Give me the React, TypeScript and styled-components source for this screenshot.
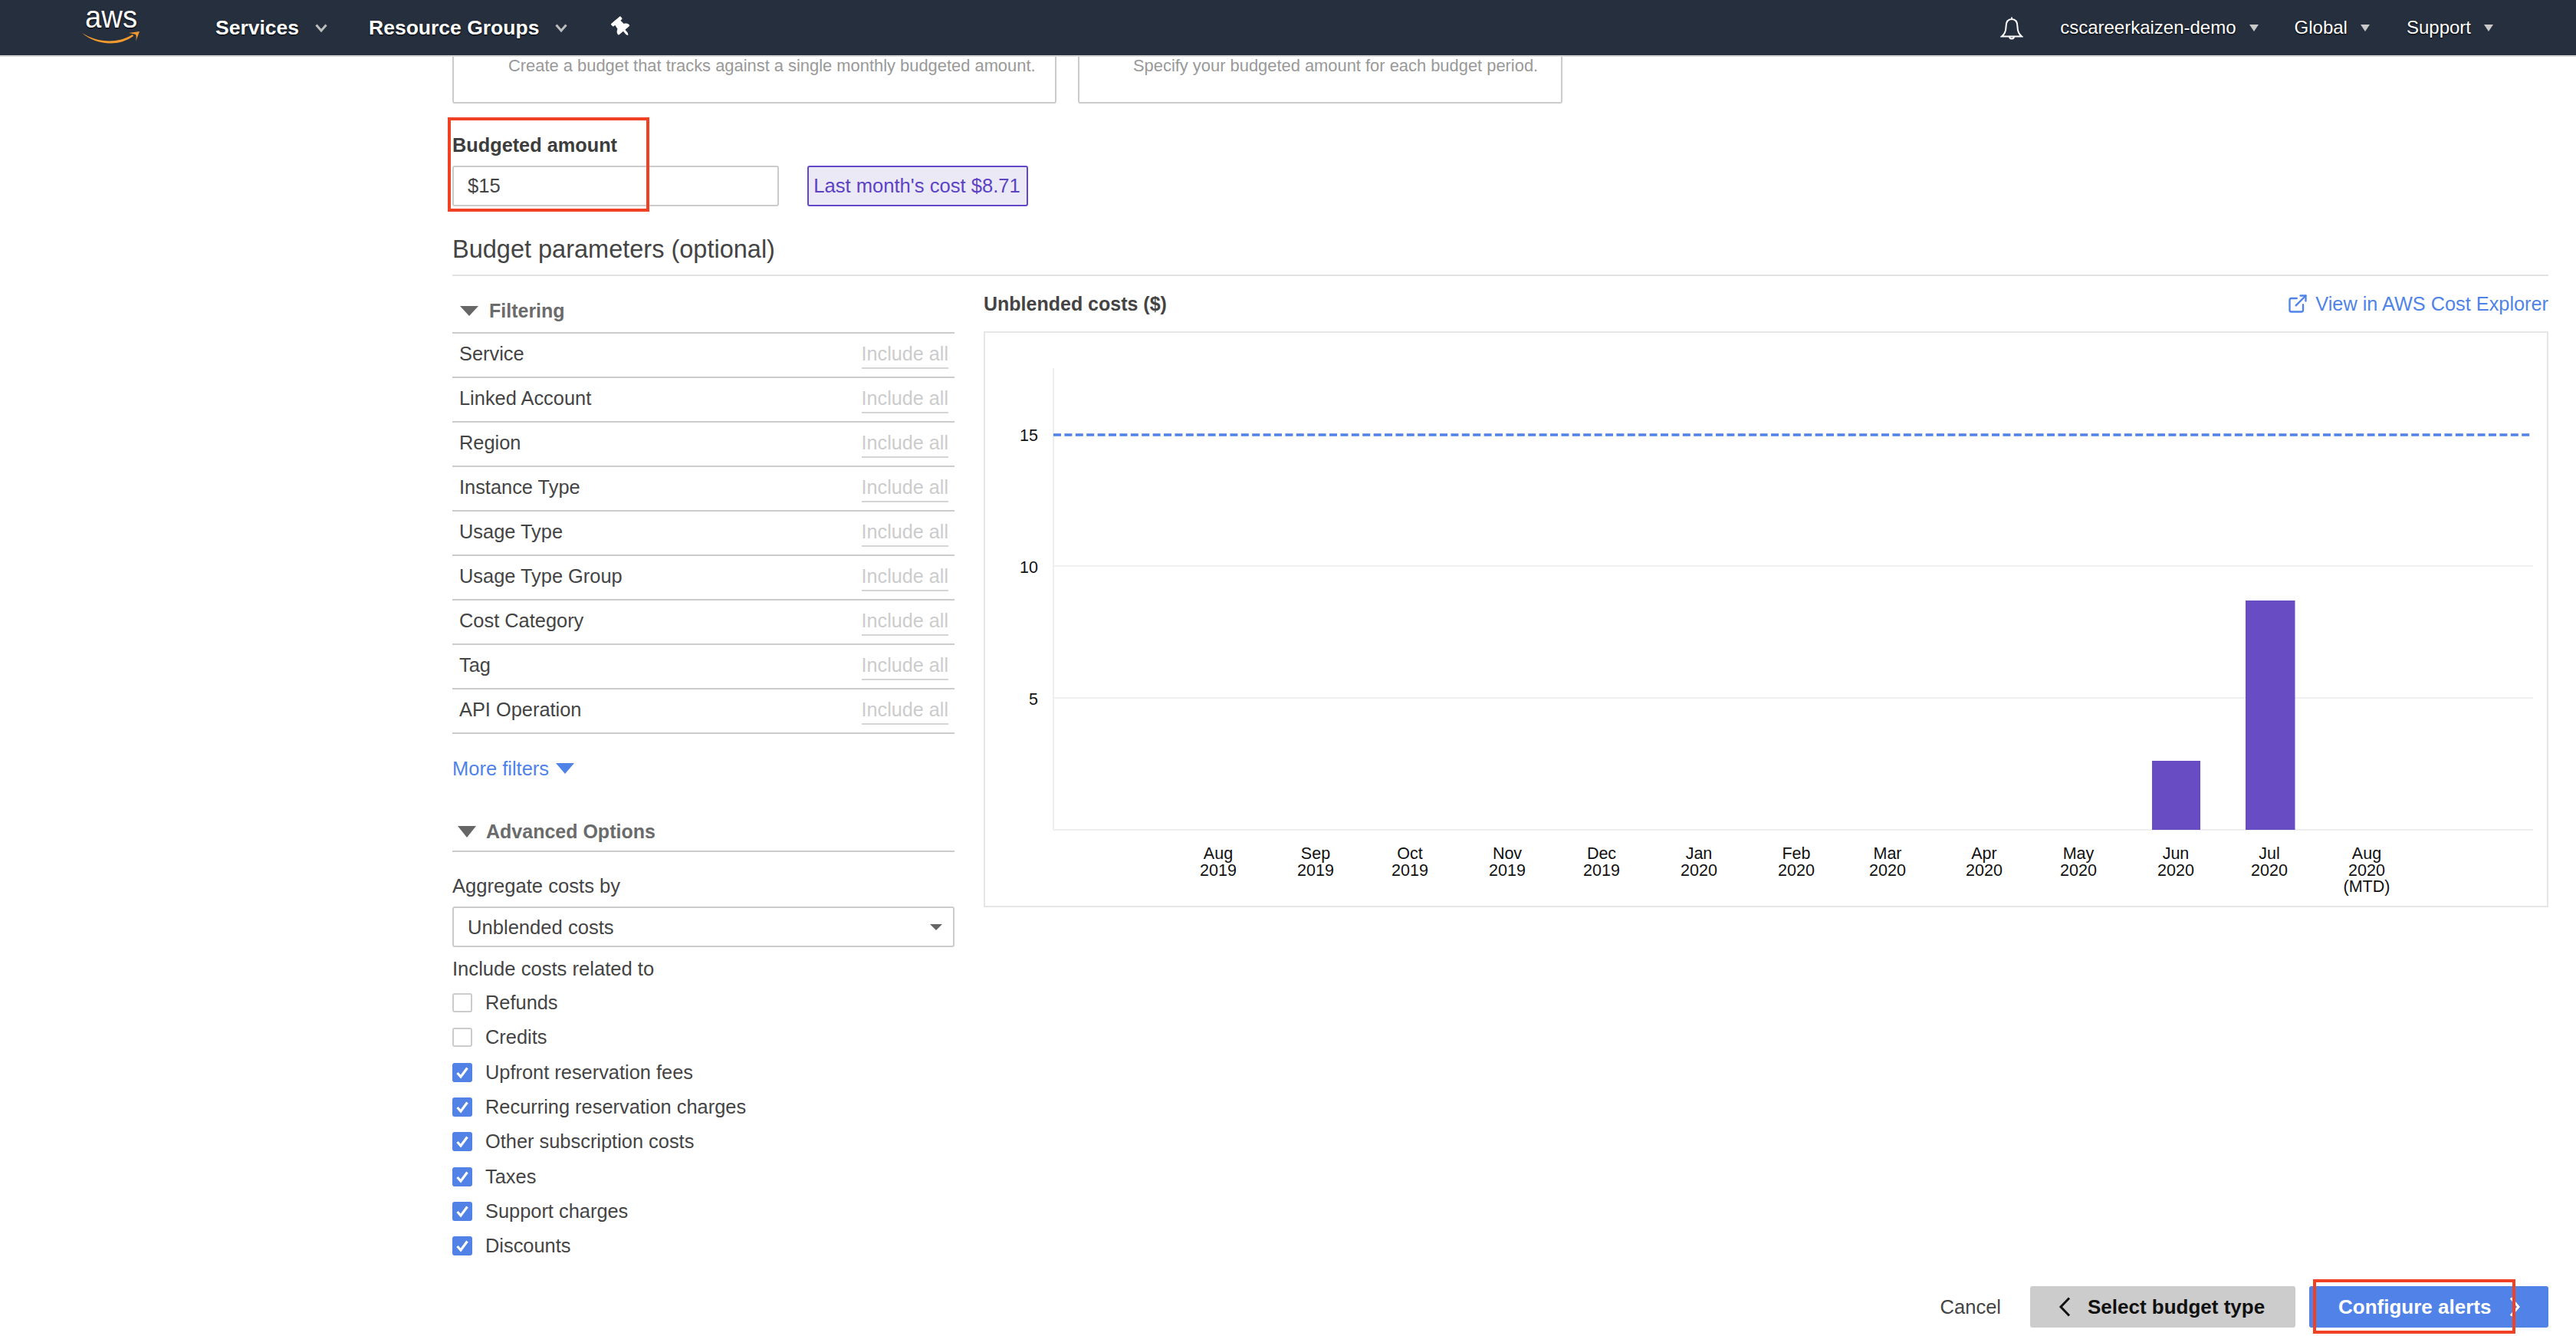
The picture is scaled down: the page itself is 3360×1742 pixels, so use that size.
import React from 'react'
import styled, { createGlobalStyle } from 'styled-components'
import { ExternalLink } from 'lucide-react'
import { FaThumbtack } from 'react-icons/fa'

const Global = createGlobalStyle`
html, body { margin: 0; padding: 0; background: #fff; }
body { font-family: "Liberation Sans", Arial, sans-serif; color: #444; overflow: hidden; }
* { box-sizing: border-box; }
`

const Page = styled.div`
width: 3360px;
height: 1742px;
overflow: hidden;
`

const Nav = styled.header`
height: 74px;
background: #262f3e;
border-bottom: 2px solid #d5d5d5;
display: flex;
align-items: center;
color: #fff;
text-shadow: 0 1px 2px #000;
`

const Logo = styled.svg`
width: 78px;
height: 72px;
margin-left: 104px;
margin-right: 99px;
`

const NavMain = styled.a`
display: flex;
align-items: center;
font-size: 26.5px;
font-weight: bold;
gap: 21px;
margin-right: 54px;
`

const Pin = styled(FaThumbtack)`
width: 26px;
height: 26px;
transform: rotate(-40deg);
margin-left: 4px;
`

const NavRight = styled.div`
margin-left: auto;
margin-right: 108px;
display: flex;
align-items: center;
`

const NavItem = styled.a<{ $gap: number }>`
display: flex;
align-items: center;
font-size: 24px;
gap: 17px;
margin-left: ${(p) => p.$gap}px;
`

const Content = styled.main`
padding: 0 36px 0 590px;
`

const TypeRow = styled.div`
display: flex;
gap: 28px;
`

const TypeCard = styled.div<{ $w: number; $pad: number }>`
width: ${(p) => p.$w}px;
height: 61px;
border: 2px solid #ccc;
border-top: 0;
border-radius: 0 0 3px 3px;
padding-left: ${(p) => p.$pad}px;
font-size: 21.9px;
line-height: 24px;
color: #999;
`

const AmountLabel = styled.div`
font-size: 25.3px;
font-weight: bold;
line-height: 30px;
margin-top: 39px;
color: #3d3d3d;
`

const AmountRow = styled.div`
display: flex;
gap: 37px;
margin-top: 12px;
position: relative;
`

const Highlight = styled.div<{ $l: number; $t: number; $w: number; $h: number }>`
position: absolute;
left: ${(p) => p.$l}px;
top: ${(p) => p.$t}px;
width: ${(p) => p.$w}px;
height: ${(p) => p.$h}px;
border: 4px solid #f04125;
pointer-events: none;
`

const AmountInput = styled.div`
width: 426px;
height: 53px;
border: 2px solid #ccc;
border-radius: 3px;
display: flex;
align-items: center;
padding-left: 18px;
font-size: 25.6px;
`

const CostButton = styled.div`
width: 288px;
height: 53px;
border: 2px solid #6248c8;
border-radius: 3px;
background: #ece9f7;
color: #5b43c4;
display: flex;
align-items: center;
justify-content: center;
padding-right: 2px;
font-size: 25.6px;
white-space: nowrap;
`

const SectionTitle = styled.h2`
font-size: 32.5px;
font-weight: normal;
line-height: 40px;
margin: 36px 0 0;
padding-bottom: 13px;
border-bottom: 2px solid #e2e2e2;
color: #444;
`

const Columns = styled.div`
display: flex;
gap: 38px;
`

const LeftCol = styled.div`
width: 655px;
flex: none;
`

const RightCol = styled.div`
flex: 1;
`

const Caret = styled.span<{ $w: number; $h: number; $c: string }>`
display: inline-block;
width: 0;
height: 0;
border-left: ${(p) => p.$w / 2}px solid transparent;
border-right: ${(p) => p.$w / 2}px solid transparent;
border-top: ${(p) => p.$h}px solid ${(p) => p.$c};
flex: none;
`

const FilterHead = styled.div`
height: 75px;
padding: 31px 0 0 10px;
display: flex;
align-items: flex-start;
gap: 14px;
font-size: 25px;
line-height: 28px;
font-weight: bold;
color: #6b6b6b;
border-bottom: 2px solid #ccc;
`

const CaretWrap = styled.span`
height: 28px;
display: flex;
align-items: center;
`

const FilterRow = styled.div`
height: 58px;
border-bottom: 2px solid #ccc;
display: flex;
justify-content: space-between;
padding: 0 8px 0 9px;
font-size: 25.4px;
line-height: 28px;
`

const FilterName = styled.span`
padding-top: 12px;
`

const IncludeAll = styled.span`
height: 46px;
padding-top: 12px;
font-size: 25.2px;
color: #ccc;
border-bottom: 2px solid #d5d5d5;
`

const MoreFilters = styled.a`
display: flex;
align-items: center;
gap: 9px;
margin-top: 30px;
height: 30px;
font-size: 25.5px;
color: #4f83e8;
`

const AdvancedHead = styled.div`
display: flex;
align-items: flex-start;
margin-top: 53px;
height: 41px;
padding-left: 7px;
gap: 13px;
font-size: 25px;
line-height: 28px;
font-weight: bold;
color: #6b6b6b;
border-bottom: 2px solid #ccc;
`

const FieldLabel = styled.div<{ $top: number }>`
font-size: 25.6px;
line-height: 28px;
margin-top: ${(p) => p.$top}px;
`

const SelectBox = styled.div`
height: 53px;
margin-top: 13px;
border: 2px solid #ccc;
border-radius: 3px;
display: flex;
align-items: center;
justify-content: space-between;
padding: 1px 14px 0 18px;
font-size: 25.6px;
`

const CheckList = styled.div`
margin-top: 8px;
`

const CheckRow = styled.label`
height: 45.3px;
display: flex;
align-items: center;
gap: 17px;
font-size: 25.4px;
`

const Box = styled.span<{ $on: boolean }>`
width: 26px;
height: 25px;
flex: none;
border-radius: 3px;
border: 2px solid ${(p) => (p.$on ? '#5282e6' : '#ccc')};
background: ${(p) => (p.$on ? '#5282e6' : '#fff')};
display: flex;
align-items: center;
justify-content: center;
`

const ChartHead = styled.div`
height: 72px;
display: flex;
justify-content: space-between;
align-items: center;
`

const ChartTitle = styled.div`
font-size: 25px;
font-weight: bold;
color: #444;
`

const ExplorerLink = styled.a`
display: flex;
align-items: center;
gap: 9px;
font-size: 25.3px;
color: #4f83e8;
`

const ChartPanel = styled.div`
height: 751px;
border: 2px solid #e6e6e6;
`

const ChartSvg = styled.svg`
display: block;
width: 2037px;
height: 747px;
font-family: "Liberation Sans", Arial, sans-serif;
`

const Footer = styled.footer`
display: flex;
justify-content: flex-end;
align-items: center;
margin-top: 30px;
position: relative;
`

const CancelLink = styled.a`
font-size: 25.5px;
margin-right: 38px;
`

const PrevButton = styled.button`
width: 346px;
height: 54px;
border: 0;
border-radius: 3px;
background: #ccc;
color: #111;
font: bold 26px "Liberation Sans", Arial, sans-serif;
display: flex;
align-items: center;
padding-left: 37px;
gap: 22px;
`

const NextButton = styled.button`
width: 312px;
height: 54px;
margin-left: 18px;
border: 0;
border-radius: 3px;
background: #5082e8;
color: #fff;
font: bold 26px "Liberation Sans", Arial, sans-serif;
display: flex;
align-items: center;
padding-left: 38px;
gap: 24px;
`

const filters = ['Service', 'Linked Account', 'Region', 'Instance Type', 'Usage Type', 'Usage Type Group', 'Cost Category', 'Tag', 'API Operation']

const costs = [
  { label: 'Refunds', on: false },
  { label: 'Credits', on: false },
  { label: 'Upfront reservation fees', on: true },
  { label: 'Recurring reservation charges', on: true },
  { label: 'Other subscription costs', on: true },
  { label: 'Taxes', on: true },
  { label: 'Support charges', on: true },
  { label: 'Discounts', on: true },
]

const months = [
  { x: 1589, m: 'Aug', y: '2019' },
  { x: 1716, m: 'Sep', y: '2019' },
  { x: 1839, m: 'Oct', y: '2019' },
  { x: 1966, m: 'Nov', y: '2019' },
  { x: 2089, m: 'Dec', y: '2019' },
  { x: 2216, m: 'Jan', y: '2020' },
  { x: 2343, m: 'Feb', y: '2020' },
  { x: 2462, m: 'Mar', y: '2020' },
  { x: 2588, m: 'Apr', y: '2020' },
  { x: 2711, m: 'May', y: '2020' },
  { x: 2838, m: 'Jun', y: '2020' },
  { x: 2960, m: 'Jul', y: '2020' },
  { x: 3087, m: 'Aug', y: '2020', extra: '(MTD)' },
]

const NavChevron = () => (
  <svg width="16" height="11" viewBox="0 0 16 11">
    <path d="M1.5 1.5 L8 9 L14.5 1.5" fill="none" stroke="#bdbdbd" strokeWidth="3" />
  </svg>
)

const Tick = () => (
  <svg width="18" height="17" viewBox="0 0 18 17">
    <path d="M2.5 9 L7 14 L15.5 2.5" fill="none" stroke="#fff" strokeWidth="3.2" />
  </svg>
)

const Bell = () => (
  <svg width="30" height="31" viewBox="0 0 30 31">
    <path d="M15 1.5 V4 M15 4 C9 4 7.5 9 7.5 14 C7.5 20 5 24 2 26.5 H28 C25 24 22.5 20 22.5 14 C22.5 9 21 4 15 4 Z M12 26.5 C12 30.5 18 30.5 18 26.5" fill="none" stroke="#fff" strokeWidth="2" />
  </svg>
)

const Chart = () => (
  <ChartSvg viewBox="1285 434 2037 747">
    <line x1="1374" y1="480" x2="1374" y2="1082" stroke="#eee" strokeWidth="2" />
    <line x1="1374" y1="738" x2="3304" y2="738" stroke="#f0f0f0" strokeWidth="2" />
    <line x1="1374" y1="910" x2="3304" y2="910" stroke="#f0f0f0" strokeWidth="2" />
    <line x1="1374" y1="1082" x2="3304" y2="1082" stroke="#eee" strokeWidth="2" />
    <line x1="1374" y1="567" x2="3300" y2="567" stroke="#4f83e8" strokeWidth="3.5" strokeDasharray="10 4.4" />
    <rect x="2807" y="992" width="63" height="90" fill="#674cc4" />
    <rect x="2929" y="783" width="64.5" height="299" fill="#674cc4" />
    <g fontSize="21.5" fill="#111" textAnchor="end">
      <text x="1354" y="575">15</text>
      <text x="1354" y="747">10</text>
      <text x="1354" y="919">5</text>
    </g>
    <g fontSize="21.5" fill="#111" textAnchor="middle">
      {months.map((d) => (
        <text key={d.m + d.y} x={d.x} y="1120">
          <tspan x={d.x}>{d.m}</tspan>
          <tspan x={d.x} dy="21.5">{d.y}</tspan>
          {d.extra && <tspan x={d.x} dy="21.5">{d.extra}</tspan>}
        </text>
      ))}
    </g>
  </ChartSvg>
)

const App = () => {
  return (
    <Page>
      <Global />
      <Nav>
        <Logo viewBox="0 0 78 72">
          <text x="7" y="36" fontSize="40" textLength="68" lengthAdjust="spacingAndGlyphs" fill="#fff" fontFamily="'Liberation Sans', Arial, sans-serif">aws</text>
          <path d="M3 43 C22 55 48 58 69 45 L70 47 C50 62 20 58 3 43 Z" fill="#f29a2e" />
          <path d="M64 43 L78 41 L73 54 C74 50 74 47 73 45 C71 44 68 44 64 43 Z" fill="#f29a2e" />
        </Logo>
        <NavMain>Services <NavChevron /></NavMain>
        <NavMain>Resource Groups <NavChevron /></NavMain>
        <Pin />
        <NavRight>
          <Bell />
          <NavItem $gap={48}>cscareerkaizen-demo <Caret $w={12} $h={9} $c="#c8c8c8" /></NavItem>
          <NavItem $gap={47}>Global <Caret $w={12} $h={9} $c="#c8c8c8" /></NavItem>
          <NavItem $gap={48}>Support <Caret $w={12} $h={9} $c="#c8c8c8" /></NavItem>
        </NavRight>
      </Nav>
      <Content>
        <TypeRow>
          <TypeCard $w={788} $pad={71}>Create a budget that tracks against a single monthly budgeted amount.</TypeCard>
          <TypeCard $w={632} $pad={70}>Specify your budgeted amount for each budget period.</TypeCard>
        </TypeRow>
        <AmountLabel>Budgeted amount</AmountLabel>
        <AmountRow>
          <AmountInput>$15</AmountInput>
          <CostButton>Last month's cost $8.71</CostButton>
          <Highlight $l={-6} $t={-63} $w={263} $h={123} />
        </AmountRow>
        <SectionTitle>Budget parameters (optional)</SectionTitle>
        <Columns>
          <LeftCol>
            <FilterHead>
              <CaretWrap><Caret $w={24} $h={13} $c="#666" /></CaretWrap>
              Filtering
            </FilterHead>
            {filters.map((f) => (
              <FilterRow key={f}>
                <FilterName>{f}</FilterName>
                <IncludeAll>Include all</IncludeAll>
              </FilterRow>
            ))}
            <MoreFilters>More filters <Caret $w={24} $h={14} $c="#4f83e8" /></MoreFilters>
            <AdvancedHead>
              <CaretWrap><Caret $w={25} $h={15} $c="#666" /></CaretWrap>
              Advanced Options
            </AdvancedHead>
            <FieldLabel $top={30}>Aggregate costs by</FieldLabel>
            <SelectBox>Unblended costs <Caret $w={16} $h={8} $c="#666" /></SelectBox>
            <FieldLabel $top={14}>Include costs related to</FieldLabel>
            <CheckList>
              {costs.map((c) => (
                <CheckRow key={c.label}>
                  <Box $on={c.on}>{c.on && <Tick />}</Box>
                  {c.label}
                </CheckRow>
              ))}
            </CheckList>
          </LeftCol>
          <RightCol>
            <ChartHead>
              <ChartTitle>Unblended costs ($)</ChartTitle>
              <ExplorerLink><ExternalLink size={28} strokeWidth={2} />View in AWS Cost Explorer</ExplorerLink>
            </ChartHead>
            <ChartPanel><Chart /></ChartPanel>
          </RightCol>
        </Columns>
        <Footer>
          <CancelLink>Cancel</CancelLink>
          <PrevButton>
            <svg width="16" height="26" viewBox="0 0 16 26"><path d="M14 1.5 L3 13 L14 24.5" fill="none" stroke="#111" strokeWidth="3" /></svg>
            Select budget type
          </PrevButton>
          <NextButton>
            Configure alerts
            <svg width="14" height="26" viewBox="0 0 14 26"><path d="M2 1.5 L12 13 L2 24.5" fill="none" stroke="#fff" strokeWidth="3" /></svg>
          </NextButton>
          <Highlight $l={2427} $t={-9} $w={264} $h={71} />
        </Footer>
      </Content>
    </Page>
  )
}

export default App
